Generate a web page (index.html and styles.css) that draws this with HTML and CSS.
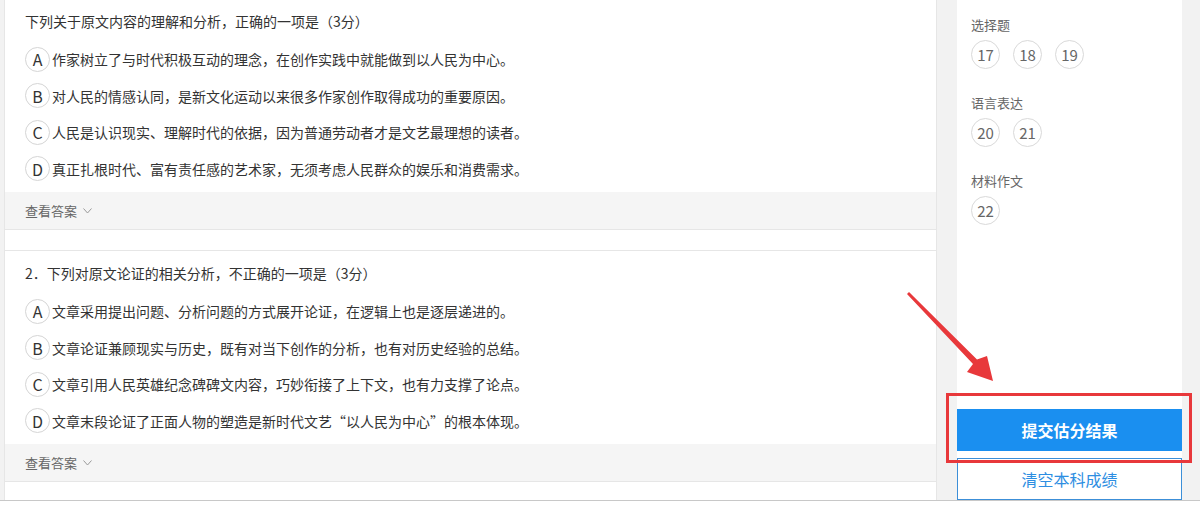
FILE: index.html
```html
<!DOCTYPE html>
<html>

<head>
    <meta charset="utf-8">
    <link rel="stylesheet" href="styles.css">
</head>

<body>

    <div class="page">
        <div class="main">
            <div class="question-list">

                <div class="question">
                    <p class="question-title">下列关于原文内容的理解和分析，正确的一项是（3分）</p>
                    <ul class="options">
                        <li class="option"><span class="option-letter">A</span>作家树立了与时代积极互动的理念，在创作实践中就能做到以人民为中心。</li>
                        <li class="option"><span class="option-letter">B</span>对人民的情感认同，是新文化运动以来很多作家创作取得成功的重要原因。</li>
                        <li class="option"><span class="option-letter">C</span>人民是认识现实、理解时代的依据，因为普通劳动者才是文艺最理想的读者。</li>
                        <li class="option"><span class="option-letter">D</span>真正扎根时代、富有责任感的艺术家，无须考虑人民群众的娱乐和消费需求。</li>
                    </ul>
                    <div class="answer-toggle">
                        查看答案
                        <svg class="chevron" width="9" height="6" viewBox="0 0 9 6">
                            <polyline points="0.5,0.5 4.5,5 8.5,0.5" fill="none" stroke="#999" stroke-width="1"/>
                        </svg>
                    </div>
                </div>

                <div class="question">
                    <p class="question-title">2．下列对原文论证的相关分析，不正确的一项是（3分）</p>
                    <ul class="options">
                        <li class="option"><span class="option-letter">A</span>文章采用提出问题、分析问题的方式展开论证，在逻辑上也是逐层递进的。</li>
                        <li class="option"><span class="option-letter">B</span>文章论证兼顾现实与历史，既有对当下创作的分析，也有对历史经验的总结。</li>
                        <li class="option"><span class="option-letter">C</span>文章引用人民英雄纪念碑碑文内容，巧妙衔接了上下文，也有力支撑了论点。</li>
                        <li class="option"><span class="option-letter">D</span>文章末段论证了正面人物的塑造是新时代文艺“以人民为中心”的根本体现。</li>
                    </ul>
                    <div class="answer-toggle">
                        查看答案
                        <svg class="chevron" width="9" height="6" viewBox="0 0 9 6">
                            <polyline points="0.5,0.5 4.5,5 8.5,0.5" fill="none" stroke="#999" stroke-width="1"/>
                        </svg>
                    </div>
                </div>

            </div>
        </div>

        <div class="sidebar">
            <div class="group">
                <div class="group-title">选择题</div>
                <div class="numbers">
                    <span class="number">17</span>
                    <span class="number">18</span>
                    <span class="number">19</span>
                </div>
            </div>
            <div class="group">
                <div class="group-title">语言表达</div>
                <div class="numbers">
                    <span class="number">20</span>
                    <span class="number">21</span>
                </div>
            </div>
            <div class="group">
                <div class="group-title">材料作文</div>
                <div class="numbers">
                    <span class="number">22</span>
                </div>
            </div>

            <div class="sidebar-buttons">
                <button class="btn-submit">提交估分结果</button>
                <button class="btn-clear">清空本科成绩</button>
            </div>
        </div>
    </div>

    <div class="status-bar"></div>

    <!-- red markup drawn over the screenshot -->
    <svg class="markup" width="1200" height="508" viewBox="0 0 1200 508">
        <polygon points="909,292 977,359.5 987,356 993,381 967,372 973,364 907,294" fill="#e8383b"/>
        <rect x="947.5" y="394.5" width="243" height="67" fill="none" stroke="#e8383b" stroke-width="3"/>
    </svg>

</body>

</html>
```

FILE: styles.css
```css
body {
    margin: 0;
    font-family: "Microsoft YaHei", "Noto Sans CJK SC", sans-serif;
    color: #333;
    background-color: #fff;
    position: relative;
}

.page {
    display: flex;
    height: 500px;
    overflow: hidden;
    padding-left: 4px;
    background-color: #f2f2f2;
}

.main {
    width: 931px;
    background-color: #fff;
    border-left: 1px solid #e6e6e6;
    border-right: 1px solid #e6e6e6;
}

.question-list {
    margin-top: -2px;
}

.question {
    border-top: 1px solid #e6e6e6;
    border-bottom: 1px solid #e6e6e6;
    margin-bottom: 20px;
}

.question-title {
    margin: 0;
    padding: 10px 20px 0;
    font-size: 14px;
    line-height: 24px;
}

.options {
    list-style: none;
    margin: 8px 0 0;
    padding: 0 20px 5px;
}

.option {
    display: flex;
    align-items: center;
    height: 36.5px;
    font-size: 14px;
}

.option-letter {
    display: flex;
    align-items: center;
    justify-content: center;
    box-sizing: border-box;
    width: 25px;
    height: 25px;
    margin-right: 2px;
    border: 1px solid #d5d5d5;
    border-radius: 50%;
    font-size: 16px;
    color: #333;
}

.answer-toggle {
    display: flex;
    align-items: center;
    height: 37px;
    padding: 0 20px;
    background-color: #f5f5f5;
    font-size: 13px;
    color: #666;
}

.chevron {
    margin-left: 6px;
    margin-top: 1px;
}

.sidebar {
    display: flex;
    flex-direction: column;
    width: 225px;
    margin-left: 20px;
    padding-top: 15px;
    box-sizing: border-box;
    background-color: #fff;
}

.group {
    padding-left: 14px;
    margin-bottom: 24px;
}

.group-title {
    font-size: 13px;
    line-height: 20px;
    color: #666;
    margin-bottom: 5px;
}

.numbers {
    display: flex;
    gap: 13px;
}

.number {
    display: flex;
    align-items: center;
    justify-content: center;
    box-sizing: border-box;
    width: 29px;
    height: 29px;
    border: 1px solid #d9d9d9;
    border-radius: 50%;
    font-size: 15px;
    color: #666;
}

.sidebar-buttons {
    margin-top: auto;
    display: flex;
    flex-direction: column;
    gap: 7px;
}

.sidebar-buttons button {
    height: 42px;
    width: 100%;
    font-family: inherit;
    font-size: 16px;
    cursor: pointer;
}

.btn-submit {
    border: none;
    background-color: #1a8ff0;
    color: #fff;
    font-weight: bold;
}

.btn-clear {
    border: 1px solid #3c8fd8;
    background-color: #fff;
    color: #2d8ee2;
}

.status-bar {
    height: 7px;
    border-top: 1px solid #c8c8c8;
    background-color: #fff;
}

.markup {
    position: absolute;
    left: 0;
    top: 0;
    pointer-events: none;
}
```
